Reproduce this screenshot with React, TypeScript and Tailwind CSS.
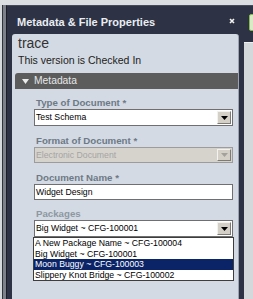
const packages = [
  "A New Package Name ~ CFG-100004",
  "Big Widget ~ CFG-100001",
  "Moon Buggy ~ CFG-100003",
  "Slippery Knot Bridge ~ CFG-100002",
];

function DropButton({ disabled }: { disabled?: boolean }) {
  return (
    <div className="ml-auto h-full w-[14px] bg-[#d4d0c8] border-t border-l border-t-[#f4f2ee] border-l-[#f4f2ee] border-r border-b border-r-[#7d7b76] border-b-[#7d7b76] flex items-center justify-center">
      <svg width="7" height="4" viewBox="0 0 7 4">
        <path d="M0 0h7L3.5 4z" fill={disabled ? "#a3a19c" : "#000"} />
      </svg>
    </div>
  );
}

function Label({ text, light }: { text: string; light?: boolean }) {
  return (
    <div className={"pl-[2px] text-[9.7px] leading-[11px] font-bold " + (light ? "text-[#8d97a2]" : "text-[#6d7986]")}>
      {text}
    </div>
  );
}

export default function App() {
  return (
    <div className="w-[253px] h-[299px] overflow-hidden bg-[#d7dadd] flex flex-col font-['Liberation_Sans',Arial,sans-serif]">
      <div className="h-[5px] shrink-0 bg-[#dcdfe2]" />
      <div className="flex flex-1 min-h-0">
        <div className="w-[2px] shrink-0" />
        <div className="w-px shrink-0 bg-[#30343c]" />
        <div className="w-[3px] shrink-0 bg-[#7d828a]" />
        <div className="flex-1 min-w-0 flex flex-col bg-[#2d3244] border-l border-[#1b1e27] border-t border-t-[#454b5c]">
          {/* header */}
          <div className="h-[28px] shrink-0 flex items-start pl-[10px]">
            <div className="mt-[10px] text-[11px] leading-[12px] font-bold text-[#e9edf2] whitespace-nowrap">
              Metadata &amp; File Properties
            </div>
            <svg className="ml-auto mt-[12px] shrink-0" width="6" height="6" viewBox="0 0 6 6">
              <path d="M1 1l4 4M5 1L1 5" stroke="#f2f2f2" strokeWidth="1.6" />
            </svg>
            <div className="ml-[14px] -mr-[6px] mt-[8px] h-[17px] w-[10px] shrink-0 rounded-[2px] border border-[#86bb4f] bg-[#dbeac6]" />
          </div>

          {/* body */}
          <div className="flex flex-1 min-h-0 pl-[5px]">
            <div className="w-[227px] shrink-0 rounded-t-[3px] bg-[#d3dae3] border-r border-[#9ba4af] flex flex-col">
              <div className="pl-[6px] pt-[1px] text-[14px] leading-[17px] text-[#333]">trace</div>
              <div className="pl-[6px] mt-[2px] text-[10.5px] leading-[13px] text-[#222]">This version is Checked In</div>

              <div className="ml-[3px] mt-[6px] h-[16px] rounded-tl-[3px] bg-[#5c5c5c] flex items-center pl-[7px] gap-[5px]">
                <svg width="7" height="5" viewBox="0 0 7 5">
                  <path d="M0 0h7L3.5 5z" fill="#ececec" />
                </svg>
                <span className="text-[10.3px] leading-[12px] text-[#e6e6e6]">Metadata</span>
              </div>

              <div className="pl-[22px] flex flex-col">
                <div className="mt-[8px]">
                  <Label text="Type of Document *" />
                </div>
                <div className="mt-[1px] w-[199px] h-[17px] border border-[#6f6f6f] bg-white flex items-center pl-[1px] pr-px py-px">
                  <span className="text-[8.7px] leading-[11px] text-black">Test Schema</span>
                  <DropButton />
                </div>

                <div className="mt-[9px]">
                  <Label text="Format of Document *" />
                </div>
                <div className="mt-[1px] w-[199px] h-[16px] border border-[#9c9c9c] bg-[#d6d3cd] flex items-center pl-[1px] pr-px py-px">
                  <span className="text-[8.7px] leading-[11px] text-[#a4a4a4]">Electronic Document</span>
                  <DropButton disabled />
                </div>

                <div className="mt-[9px]">
                  <Label text="Document Name *" />
                </div>
                <div className="mt-[1px] w-[199px] h-[16px] border border-[#6f6f6f] bg-white flex items-center pl-[1px]">
                  <span className="text-[8.7px] leading-[11px] text-black">Widget Design</span>
                </div>

                <div className="mt-[8px]">
                  <Label text="Packages" light />
                </div>
                <div className="mt-[1px] w-[199px] h-[17px] border border-[#6f6f6f] bg-white flex items-center pl-[1px] pr-px py-px">
                  <span className="text-[8.7px] leading-[11px] text-black">Big Widget ~ CFG-100001</span>
                  <DropButton />
                </div>
                <div className="-ml-px w-[201px] border border-[#3d3d3d] bg-white">
                  {packages.map((p) => (
                    <div
                      key={p}
                      className={
                        "pl-px text-[8.7px] leading-[10.5px] whitespace-nowrap " +
                        (p.startsWith("Moon") ? "bg-[#0b2468] text-white" : "text-black")
                      }
                    >
                      {p}
                    </div>
                  ))}
                </div>
              </div>
            </div>
            <div className="w-[5px] shrink-0" />
            <div className="flex-1 mt-[8px] bg-[#d5d8db] border-t border-[#eef0f2]" />
          </div>
        </div>
      </div>
    </div>
  );
}
